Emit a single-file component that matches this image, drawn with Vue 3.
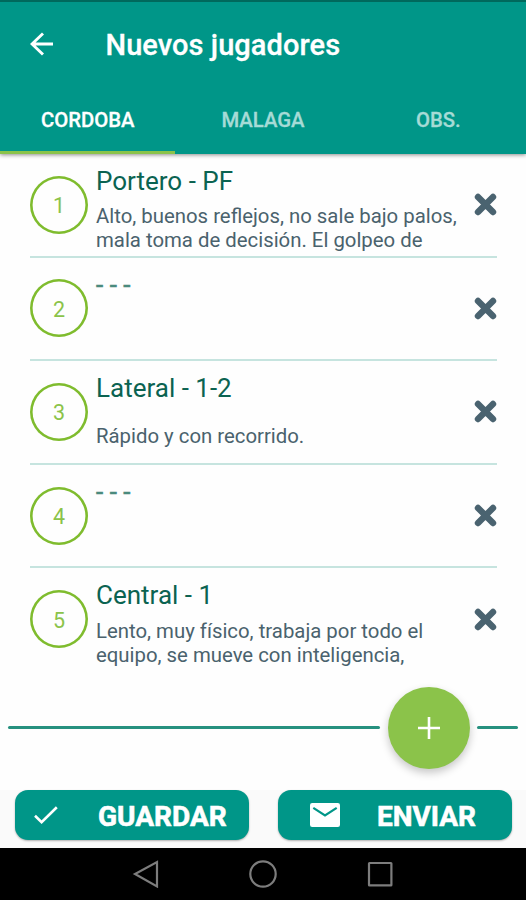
<template>
  <div class="screen">
    <header class="app-bar">
      <div class="toolbar">
        <svg class="back-icon" viewBox="0 0 24 24" width="24" height="24">
          <path d="M23 12H2M13 1.5L2 12L13 22.5" />
        </svg>
        <h1 class="title">Nuevos jugadores</h1>
      </div>
      <nav class="tabs">
        <button
          v-for="tab in tabs"
          :key="tab"
          class="tab"
          :class="{ active: tab === activeTab }"
          @click="activeTab = tab"
        >
          <span>{{ tab }}</span>
        </button>
      </nav>
    </header>

    <main class="content">
      <ul class="player-list">
        <li v-for="(player, index) in players" :key="index" class="player">
          <div class="number">{{ index + 1 }}</div>
          <div class="info">
            <h2 class="position" :class="{ empty: !player.notes.length }">{{ player.position }}</h2>
            <p class="notes">
              <span v-for="line in player.notes" :key="line" class="notes-line">{{ line }}</span>
            </p>
          </div>
          <svg class="remove-icon" viewBox="0 0 23 23" width="23" height="23" @click="removePlayer(index)">
            <path d="M4 4L19 19M19 4L4 19" />
          </svg>
        </li>
      </ul>

      <div class="add-row">
        <span class="rule rule-left"></span>
        <button class="fab" @click="addPlayer">
          <svg viewBox="0 0 22 22" width="22" height="22">
            <path d="M11 0V22M0 11H22" />
          </svg>
        </button>
        <span class="rule rule-right"></span>
      </div>
    </main>

    <footer class="actions">
      <button class="action save">
        <svg class="check-icon" viewBox="0 0 24 18" width="24" height="18">
          <path d="M1 9.8L7.6 16.2L22.8 1.2" />
        </svg>
        <span class="label">GUARDAR</span>
      </button>
      <button class="action send">
        <svg class="mail-icon" viewBox="0 0 30 24" width="30" height="24">
          <rect width="30" height="24" rx="2.2" />
          <path d="M3.3 4.8L15 12.4L26.7 4.8" />
        </svg>
        <span class="label">ENVIAR</span>
      </button>
    </footer>

    <div class="system-nav">
      <svg viewBox="0 0 28 28" width="28" height="28">
        <path d="M25 2V26.4L3 14Z" />
      </svg>
      <svg viewBox="0 0 28 28" width="28" height="28">
        <circle cx="14" cy="14" r="12.7" />
      </svg>
      <svg viewBox="0 0 28 28" width="28" height="28">
        <rect x="3" y="3" width="22.4" height="22.4" rx="0.5" />
      </svg>
    </div>
  </div>
</template>

<script setup>
import { ref } from 'vue'

const tabs = ['CORDOBA', 'MALAGA', 'OBS.']
const activeTab = ref('CORDOBA')

const players = ref([
  {
    position: 'Portero - PF',
    notes: ['Alto, buenos reflejos, no sale bajo palos,', 'mala toma de decisión. El golpeo de']
  },
  { position: '- - -', notes: [] },
  { position: 'Lateral - 1-2', notes: ['Rápido y con recorrido.'] },
  { position: '- - -', notes: [] },
  {
    position: 'Central - 1',
    notes: ['Lento, muy físico, trabaja por todo el', 'equipo, se mueve con inteligencia,']
  }
])

const addPlayer = () => {
  players.value.push({ position: '- - -', notes: [] })
}

const removePlayer = (index) => {
  players.value.splice(index, 1)
}
</script>

<style>
body {
  margin: 0;
  background: #fff;
}
</style>

<style scoped>
.screen {
  display: flex;
  flex-direction: column;
  width: 526px;
  height: 900px;
  overflow: hidden;
  background: #fefefe;
  font-family: Roboto, sans-serif;
}

button {
  padding: 0;
  border: 0;
  font-family: inherit;
}

.app-bar {
  z-index: 1;
  display: flex;
  flex: none;
  flex-direction: column;
  box-sizing: border-box;
  height: 154px;
  border-top: 2px solid #00695c;
  background: #009688;
  box-shadow: 0 1px 4px rgba(0, 0, 0, 0.45);
}

.toolbar {
  display: flex;
  align-items: center;
  height: 83px;
  padding-left: 29.5px;
}

.back-icon {
  fill: none;
  stroke: #fff;
  stroke-width: 2.9;
}

.title {
  margin: 3px 0 0 52px;
  color: #fff;
  font-size: 29px;
  font-weight: 500;
  letter-spacing: 0.07px;
  line-height: 34px;
  white-space: nowrap;
  -webkit-text-stroke: 0.3px #fff;
}

.tabs {
  display: grid;
  flex: 1;
  grid-template-columns: repeat(3, 1fr);
}

.tab {
  padding-top: 3px;
  border-bottom: 3px solid transparent;
  background: none;
  color: #a6dbd6;
  font-size: 20.3px;
  font-weight: 500;
  -webkit-text-stroke: 0.3px currentColor;
}

.tab.active {
  border-bottom-color: #8bc34a;
  color: #fff;
}

.content {
  flex: none;
  height: 636px;
}

.player-list {
  height: 518px;
  margin: 0;
  padding: 0 29px 0 30px;
  list-style: none;
}

.player {
  display: flex;
  align-items: center;
  box-sizing: border-box;
  height: 103.6px;
  border-bottom: 2px solid #c6e4df;
}

.player:last-child {
  border-bottom-color: transparent;
}

.number {
  display: flex;
  flex: none;
  align-items: center;
  justify-content: center;
  box-sizing: border-box;
  width: 58px;
  height: 58px;
  padding-top: 2px;
  border-radius: 50%;
  box-shadow: inset 0 0 0 2.6px #7fbc2e;
  color: #8bc34a;
  font-size: 21.5px;
}

.info {
  display: flex;
  flex: 1;
  flex-direction: column;
  align-self: stretch;
  min-width: 0;
  padding: 11px 0 0 8px;
}

.position {
  margin: 0;
  color: #0b6351;
  font-size: 26px;
  font-weight: 400;
  line-height: 32px;
}

.position.empty {
  color: #4a8a7d;
  -webkit-text-stroke: 0.6px #4a8a7d;
}

.notes {
  display: flex;
  flex-direction: column;
  justify-content: center;
  height: 48px;
  margin: 7.4px 0 0;
  color: #4a626d;
  font-size: 20.35px;
  line-height: 24px;
}

.notes-line {
  white-space: nowrap;
}

.remove-icon {
  flex: none;
  fill: none;
  stroke: #4a6370;
  stroke-linecap: round;
  stroke-width: 6.4;
}

.add-row {
  display: flex;
  align-items: center;
  height: 82px;
  margin-top: 14.5px;
  padding: 0 8px;
}

.rule {
  height: 3px;
  border-radius: 1.5px;
  background: #26917f;
}

.rule-left {
  width: 372px;
}

.rule-right {
  flex: 1;
}

.fab {
  display: flex;
  flex: none;
  align-items: center;
  justify-content: center;
  width: 82px;
  height: 82px;
  margin: 0 7px 0 8px;
  border-radius: 50%;
  background: #8bc34a;
  box-shadow: 0 4px 8px rgba(0, 0, 0, 0.22);
}

.fab svg {
  fill: none;
  stroke: #fff;
  stroke-width: 2.6;
}

.actions {
  display: grid;
  flex: none;
  grid-template-columns: 1fr 1fr;
  gap: 29px;
  box-sizing: border-box;
  height: 58px;
  padding: 0 14px 8px 15px;
  background: #fafafa;
}

.action {
  display: flex;
  align-items: center;
  box-sizing: border-box;
  height: 50px;
  border-radius: 13px;
  background: #009688;
  box-shadow: 0 1px 2px rgba(0, 0, 0, 0.3);
  color: #fff;
}

.label {
  padding-top: 4px;
  font-size: 28px;
  font-weight: 700;
  line-height: 32px;
  -webkit-text-stroke: 0.6px #fff;
}

.save {
  padding-left: 19px;
}

.save .label {
  margin-left: 40px;
}

.send {
  padding-left: 32px;
}

.send .label {
  margin-left: 37px;
}

.check-icon {
  fill: none;
  stroke: #fff;
  stroke-width: 2.6;
}

.mail-icon {
  fill: #fff;
}

.mail-icon path {
  fill: none;
  stroke: #009688;
  stroke-width: 2.2;
}

.system-nav {
  display: flex;
  flex: none;
  align-items: center;
  justify-content: center;
  gap: 89px;
  height: 52px;
  background: #000;
}

.system-nav svg {
  fill: none;
  stroke: #7d7d7d;
  stroke-width: 2.2;
}
</style>
